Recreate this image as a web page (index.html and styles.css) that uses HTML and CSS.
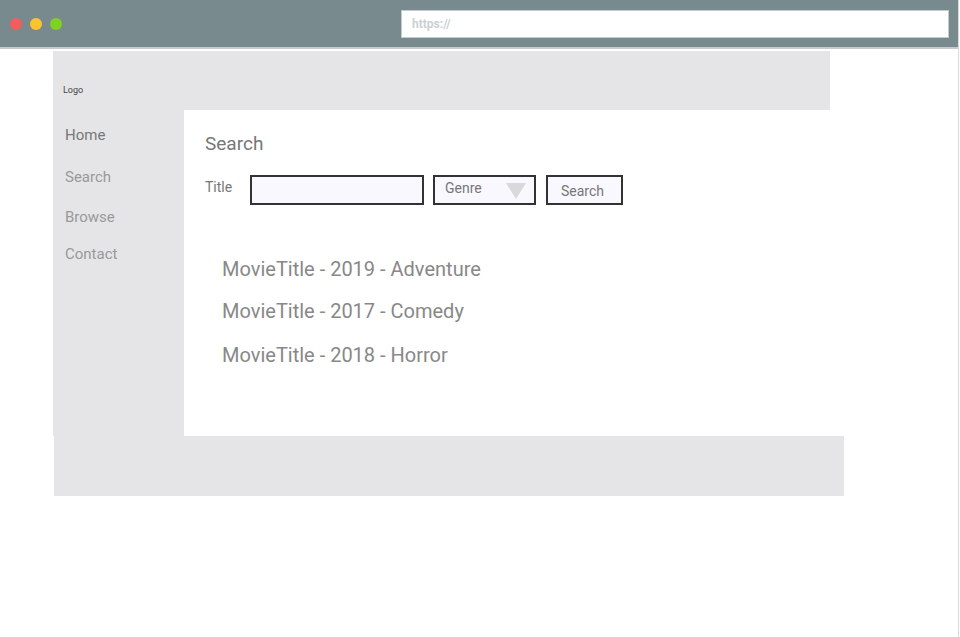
FILE: index.html
```html
<!DOCTYPE html>
<html>
<head>
<meta charset="utf-8">
<link rel="stylesheet" href="styles.css">
</head>
<body>
<div class="frame">
  <div class="chrome">
    <div class="dots">
      <span class="dot red"></span>
      <span class="dot yellow"></span>
      <span class="dot green"></span>
    </div>
    <div class="url">https://</div>
  </div>
  <div class="page">
    <div class="header"><span class="logo">Logo</span></div>
    <div class="body-row">
      <nav class="sidebar">
        <div class="nav-home">Home</div>
        <div class="nav-item">Search</div>
        <div class="nav-item">Browse</div>
        <div class="nav-item">Contact</div>
      </nav>
      <main class="main">
        <h1 class="title">Search</h1>
        <div class="form">
          <span class="label">Title</span>
          <div class="input"></div>
          <div class="select"><span>Genre</span><span class="tri"></span></div>
          <div class="button">Search</div>
        </div>
        <ul class="results">
          <li>MovieTitle - 2019 - Adventure</li>
          <li>MovieTitle - 2017 - Comedy</li>
          <li>MovieTitle - 2018 - Horror</li>
        </ul>
      </main>
    </div>
    <div class="footer"></div>
  </div>
</div>
</body>
</html>
```
FILE: styles.css
```css
html, body {
  margin: 0;
  padding: 0;
  background: #fff;
  font-family: Roboto, "Liberation Sans", sans-serif;
}
.frame {
  width: 958px;
  height: 637px;
  border-right: 1px solid #d9dcdd;
  box-sizing: content-box;
}
.chrome {
  height: 47px;
  background: #798a8f;
  border-bottom: 2px solid #c3cbce;
  display: flex;
  align-items: center;
  justify-content: space-between;
}
.dots {
  display: flex;
  gap: 8px;
  padding-left: 10px;
  padding-top: 1px;
}
.dot {
  width: 12px;
  height: 12px;
  border-radius: 50%;
  display: block;
}
.red { background: #f35d5d; }
.yellow { background: #fbc42e; }
.green { background: #7ed321; }
.url {
  width: 536px;
  height: 26px;
  margin-right: 9px;
  background: #fff;
  border: 1px solid #c3cbce;
  color: #c9d1d5;
  font-size: 12px;
  font-weight: bold;
  line-height: 26px;
  padding-left: 10px;
}
.page {
  padding-top: 2px;
}
.header {
  margin-left: 53px;
  width: 777px;
  height: 59px;
  background: #e5e5e7;
  display: flex;
  align-items: flex-end;
}
.logo {
  font-size: 9px;
  color: #444;
  padding-left: 10px;
  padding-bottom: 15px;
}
.body-row {
  display: flex;
  margin-left: 53px;
  height: 326px;
}
.sidebar {
  width: 131px;
  background: #e5e5e7;
  display: flex;
  flex-direction: column;
  font-size: 15px;
}
.nav-home {
  color: #777;
  padding: 16px 0 0 12px;
  height: 37px;
}
.nav-item {
  color: #999;
  padding-left: 12px;
  margin-top: 5px;
  height: 35px;
}
.nav-item + .nav-item {
  margin-top: 5px;
}
.nav-item:last-child { margin-top: 2px; }
.main {
  width: 660px;
  background: #fff;
  padding: 0 0 0 21px;
  box-sizing: border-box;
}
.title {
  margin: 23px 0 0 0;
  font-size: 19px;
  font-weight: normal;
  color: #777;
  line-height: 22px;
}
.form {
  display: flex;
  align-items: flex-start;
  margin-top: 20px;
}
.label {
  font-size: 14px;
  color: #777;
  margin-top: 4px;
  width: 45px;
}
.input {
  width: 170px;
  height: 26px;
  border: 2px solid #333;
  background: #f8f8fe;
}
.select {
  width: 99px;
  height: 26px;
  border: 2px solid #333;
  background: #f8f8fe;
  margin-left: 9px;
  display: flex;
  align-items: center;
  justify-content: space-between;
  font-size: 14px;
  color: #777;
}
.select span:first-child {
  padding-left: 10px;
  margin-top: -5px;
}
.tri {
  width: 0;
  height: 0;
  border-left: 10px solid transparent;
  border-right: 10px solid transparent;
  border-top: 16px solid #d9d9db;
  margin-right: 8px;
  margin-top: 2px;
}
.button {
  width: 69px;
  height: 26px;
  border: 2px solid #333;
  background: #f8f8fe;
  margin-left: 10px;
  font-size: 14px;
  color: #777;
  padding-right: 4px;
  text-align: center;
  line-height: 28px;
}
.results {
  list-style: none;
  margin: 52px 0 0 17px;
  padding: 0;
  font-size: 20px;
  color: #888;
}
.results li {
  height: 42px;
  line-height: 24px;
}
.results li:nth-child(2) { height: 44px; }
.footer {
  margin-left: 54px;
  width: 790px;
  height: 60px;
  background: #e5e5e7;
}
```
